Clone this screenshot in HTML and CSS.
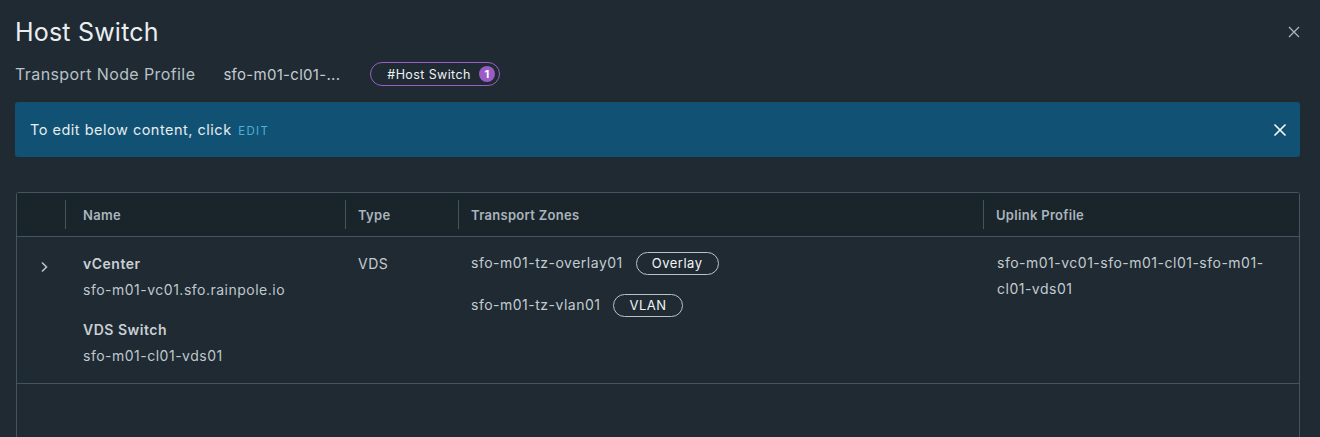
FILE: index.html
```html
<!DOCTYPE html>
<html>
<head>
<meta charset="utf-8">
<link rel="stylesheet" href="styles.css">
</head>
<body>
<div class="modal">
  <div class="title-row">
    <h1 class="title">Host Switch</h1>
    <button class="close" aria-label="Close">
      <svg width="12" height="12" viewBox="0 0 12 12"><path d="M1 1L11 11M11 1L1 11" stroke="#aab5bb" stroke-width="1.3" fill="none"/></svg>
    </button>
  </div>
  <div class="sub-row">
    <span class="sub-label">Transport Node Profile</span>
    <span class="sub-value">sfo-m01-cl01-...</span>
    <span class="pill">#Host Switch <span class="count">1</span></span>
  </div>
  <div class="alert">
    <span class="alert-text">To edit below content, click <a class="edit">EDIT</a></span>
    <svg class="alert-close" width="14" height="14" viewBox="0 0 14 14"><path d="M1.5 1.5L12.5 12.5M12.5 1.5L1.5 12.5" stroke="#ffffff" stroke-width="1.6" fill="none"/></svg>
  </div>
  <div class="table">
    <div class="thead">
      <div class="th th-first"></div>
      <div class="th th-name">Name</div>
      <div class="th">Type</div>
      <div class="th">Transport Zones</div>
      <div class="th">Uplink Profile</div>
    </div>
    <div class="trow">
      <div class="td td-first">
        <svg class="chev" width="10" height="12" viewBox="0 0 10 12"><path d="M2 1.5L6.5 6L2 10.5" stroke="#b7c2c8" stroke-width="1.6" fill="none"/></svg>
      </div>
      <div class="td td-name">
        <div class="lbl">vCenter</div>
        <div class="val">sfo-m01-vc01.sfo.rainpole.io</div>
        <div class="lbl lbl-gap">VDS Switch</div>
        <div class="val">sfo-m01-cl01-vds01</div>
      </div>
      <div class="td td-type">VDS</div>
      <div class="td td-tz">
        <div class="tz"><span>sfo-m01-tz-overlay01</span><span class="tag">Overlay</span></div>
        <div class="tz"><span>sfo-m01-tz-vlan01</span><span class="tag">VLAN</span></div>
      </div>
      <div class="td td-uplink">sfo-m01-vc01-sfo-m01-cl01-sfo-m01-<br>cl01-vds01</div>
    </div>
  </div>
</div>
</body>
</html>
```
FILE: styles.css
```css
* { box-sizing: border-box; }
html, body { margin: 0; padding: 0; }
body {
  background: #1f2a33;
  font-family: Inter, "Noto Sans", "Liberation Sans", sans-serif;
  color: #c4ccd0;
  letter-spacing: 0.5px;
  width: 1320px;
  height: 437px;
  overflow: hidden;
}
.modal { padding: 16px 20px 0 15px; }
.title-row {
  display: flex;
  justify-content: space-between;
  align-items: center;
  height: 32px;
}
.title {
  margin: 0;
  font-size: 25px;
  font-weight: 400;
  color: #e9eef0;
  letter-spacing: 0.2px;
}
.close {
  background: none;
  border: 0;
  padding: 0;
  display: flex;
  width: 12px;
  height: 12px;
  margin-top: -1px;
}
.sub-row {
  display: flex;
  align-items: center;
  margin-top: 13px;
  height: 26px;
}
.sub-label { color: #b8c1c6; font-size: 16px; letter-spacing: 0.4px; }
.sub-value { color: #c4ccd0; margin-left: 28px; font-size: 15px; letter-spacing: 0.3px; }
.pill {
  margin-left: 30px;
  display: inline-flex;
  align-items: center;
  height: 24px;
  border: 1px solid #9a5fc6;
  border-radius: 12px;
  padding: 0 4px 0 16px;
  font-size: 12.5px;
  letter-spacing: 0.4px;
  color: #eef1f3;
}
.count {
  margin-left: 8px;
  width: 16px;
  height: 16px;
  border-radius: 50%;
  background: #9b5cc8;
  color: #fff;
  font-size: 11px;
  font-weight: 700;
  letter-spacing: 0;
  display: inline-flex;
  align-items: center;
  justify-content: center;
}
.alert {
  margin-top: 15px;
  height: 55px;
  background: #115274;
  border-radius: 3px;
  display: flex;
  align-items: center;
  justify-content: space-between;
  padding: 0 13px 0 15px;
}
.alert-text { font-size: 14.5px; letter-spacing: 0.5px; color: #e6ecef; }
.edit {
  color: #49afd9;
  font-size: 11.5px;
  letter-spacing: 1.3px;
  margin-left: 2px;
}
.table {
  margin-top: 35px;
  margin-left: 1px;
  border: 1px solid #435562;
  border-radius: 3px 3px 0 0;
  border-bottom: 0;
  height: 260px;
}
.thead, .trow {
  display: grid;
  grid-template-columns: 48px 280px 113px 525px 1fr;
}
.thead {
  background: #1a242b;
  height: 44px;
  border-bottom: 1px solid #435562;
  align-items: center;
}
.th {
  position: relative;
  font-size: 13px;
  font-weight: 600;
  letter-spacing: 0.3px;
  color: #a9b5bc;
  padding-left: 13px;
  height: 100%;
  display: flex;
  align-items: center;
}
.th + .th::before {
  content: "";
  position: absolute;
  left: 0;
  top: 7px;
  bottom: 7px;
  width: 1px;
  background: #435562;
}
.th-name { padding-left: 18px; }
.trow {
  border-bottom: 1px solid #435562;
  padding: 17px 0 17px;
  font-size: 14px;
  line-height: 20px;
}
.td { padding-left: 13px; }
.td-first { padding-left: 23px; padding-top: 4px; }
.td-name { padding-left: 18px; }
.lbl { font-weight: 600; color: #c9d0d4; }
.val { margin-top: 6px; color: #c0c8cc; }
.lbl-gap { margin-top: 20px; }
.tz { display: flex; align-items: center; gap: 13px; height: 22px; margin-top: -2px; }
.tz + .tz { margin-top: 20px; }
.tag {
  display: inline-flex;
  align-items: center;
  height: 23px;
  padding: 0 15px;
  border: 1px solid #b8c3c9;
  border-radius: 12px;
  color: #f1f4f5;
  font-size: 13px;
}
.td-uplink { line-height: 26px; margin-top: -4px; padding-left: 14px; }
```
